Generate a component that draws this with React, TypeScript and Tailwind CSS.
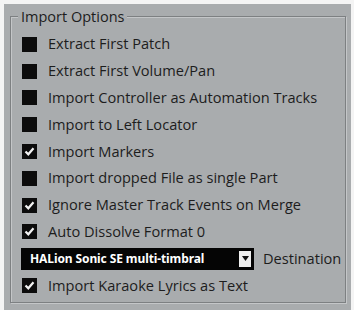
type Opt = { label: string; checked: boolean };

const options: Opt[] = [
  { label: "Extract First Patch", checked: false },
  { label: "Extract First Volume/Pan", checked: false },
  { label: "Import Controller as Automation Tracks", checked: false },
  { label: "Import to Left Locator", checked: false },
  { label: "Import Markers", checked: true },
  { label: "Import dropped File as single Part", checked: false },
  { label: "Ignore Master Track Events on Merge", checked: true },
  { label: "Auto Dissolve Format 0", checked: true },
];

function Check({ checked }: { checked: boolean }) {
  return (
    <div className="w-[15px] h-[15px] bg-[#0c0c0c] flex items-center justify-center shrink-0">
      {checked && (
        <svg width="11" height="11" viewBox="0 0 11 11">
          <path d="M1.5 5.5 L4.3 8.3 L9.5 2.2" stroke="#f2f2f2" strokeWidth="2.2" fill="none" />
        </svg>
      )}
    </div>
  );
}

function Row({ label, checked }: Opt) {
  return (
    <div className="h-[26.8px] flex items-center gap-[11px] pl-[11px]">
      <Check checked={checked} />
      <span>{label}</span>
    </div>
  );
}

export default function App() {
  return (
    <div className="w-[354px] h-[310px] bg-[#f4f4f4] pl-[4px] pr-[3px] pt-[4px]">
      <div
        className="h-full bg-[#a9acae] pl-[6px] pr-[5px] pt-[12px] pb-[7px] text-[#1d1d1d] text-[14.6px]"
        style={{ fontFamily: '"Open Sans", "Noto Sans", sans-serif' }}
      >
        <div className="relative h-full border border-[#7d8082] shadow-[inset_1px_1px_0_#c4c6c8,1px_1px_0_#c4c6c8]">
          <div className="absolute -top-[11px] left-[7px] px-[3px] bg-[#a9acae] leading-[22px] text-[14.5px]">
            Import Options
          </div>
          <div className="pt-[14px]">
            {options.map((o) => (
              <Row key={o.label} {...o} />
            ))}
            <div className="h-[26.8px] flex items-center pl-[10px] gap-[9px]">
              <div className="w-[233px] h-[22px] bg-[#050505] flex items-center justify-between pl-[9px] pr-[3px]">
                <span
                  className="text-white font-bold text-[12px] tracking-[-0.1px]"
                  style={{ fontFamily: '"Noto Sans", sans-serif' }}
                >
                  HALion Sonic SE multi-timbral
                </span>
                <div className="w-[12px] h-[16px] bg-[#f0f0f0] flex items-center justify-center">
                  <svg width="7" height="5" viewBox="0 0 7 5">
                    <path d="M0 0 H7 L3.5 5 Z" fill="#111" />
                  </svg>
                </div>
              </div>
              <span>Destination</span>
            </div>
            <Row label="Import Karaoke Lyrics as Text" checked={true} />
          </div>
        </div>
      </div>
    </div>
  );
}
